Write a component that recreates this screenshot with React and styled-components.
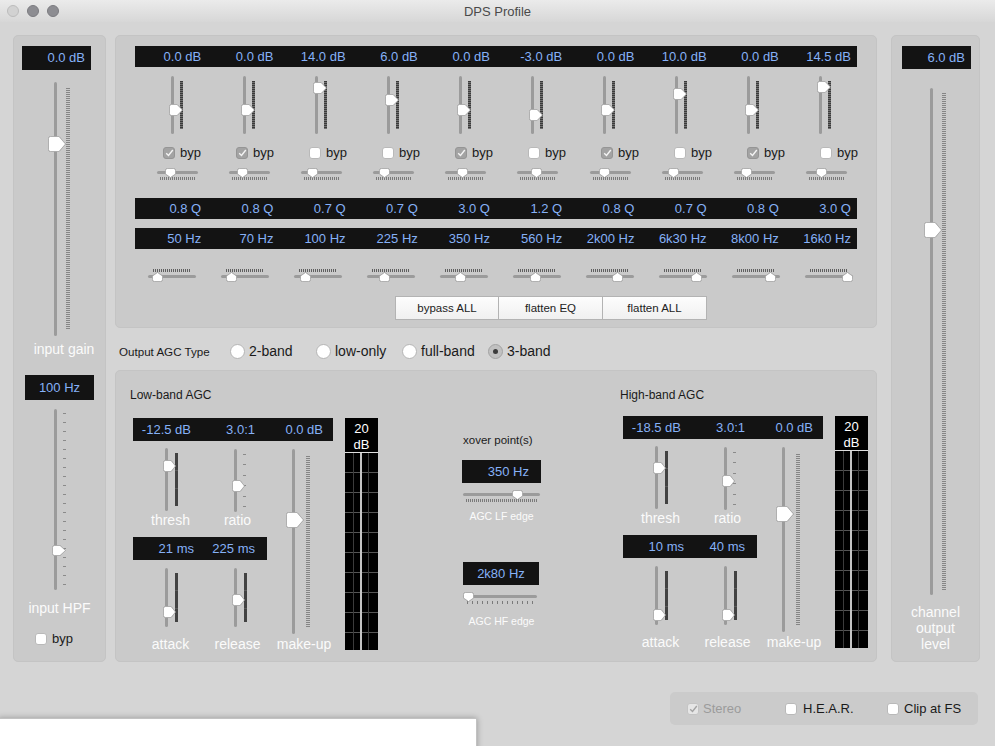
import React from 'react';
import styled, { createGlobalStyle } from 'styled-components';

const GlobalStyle = createGlobalStyle`
  html, body { margin: 0; padding: 0; }
  body {
    width: 995px; height: 746px; overflow: hidden;
    background: #d5d5d5;
    font-family: "Liberation Sans", Arial, Helvetica, sans-serif;
  }
  * { box-sizing: border-box; }
`;

/* ---------- window chrome ---------- */
const Window = styled.div`
  position: relative;
  width: 995px;
  height: 746px;
  background: #d5d5d5;
  overflow: hidden;
`;
const TitleBar = styled.div`
  height: 22px;
  display: grid;
  grid-template-columns: 1fr auto 1fr;
  align-items: center;
  padding: 0 7px;
  background: linear-gradient(#ebebeb, #d7d7d7);
`;
const Lights = styled.div`
  display: flex;
  gap: 8px;
`;
const Light = styled.span`
  width: 12px;
  height: 12px;
  border-radius: 50%;
  background: ${p => (p.$dim ? '#d2d2d2' : '#8d8d92')};
  border: 1px solid ${p => (p.$dim ? '#bcbcbc' : '#7b7b80')};
`;
const Title = styled.div`
  font-size: 13px;
  color: #4a4a4a;
`;

/* ---------- layout ---------- */
const Body = styled.div`
  display: flex;
  align-items: flex-start;
  padding: 13px 0 0 13px;
`;
const SidePanel = styled.div`
  width: ${p => p.$w}px;
  height: 627px;
  margin-left: ${p => p.$ml || 0}px;
  background: #cacaca;
  border: 1px solid #c4c4c4;
  border-radius: 5px;
  display: flex;
  flex-direction: column;
  align-items: flex-start;
`;
const CenterCol = styled.div`
  width: 762px;
  margin-left: 9px;
  display: flex;
  flex-direction: column;
`;
const EqPanel = styled.div`
  height: 293px;
  background: #cacaca;
  border: 1px solid #c4c4c4;
  border-radius: 5px;
  padding: 10px 19px 0 19px;
  display: flex;
  flex-direction: column;
`;
const AgcPanel = styled.div`
  height: 292px;
  background: #cacaca;
  border: 1px solid #c4c4c4;
  border-radius: 5px;
  padding: 17px 0 0 14px;
  display: flex;
  align-items: flex-start;
`;

/* ---------- readouts ---------- */
const Readout = styled.div`
  width: ${p => p.$w}px;
  height: ${p => p.$h}px;
  line-height: ${p => p.$h}px;
  margin: ${p => p.$mt || 0}px 0 0 ${p => p.$ml || 0}px;
  padding: 0 ${p => p.$pr ?? 6}px 0 6px;
  background: #131313;
  color: #86b1f7;
  font-size: 13px;
  text-align: ${p => p.$align || 'right'};
  white-space: nowrap;
`;
const ValueBar = styled.div`
  display: grid;
  grid-template-columns: repeat(10, 1fr);
  height: 21px;
  margin-top: ${p => p.$mt || 0}px;
  background: #131313;
`;
const ValueCell = styled.div`
  color: #86b1f7;
  font-size: 13px;
  line-height: 21px;
  text-align: right;
  padding-right: 6px;
  white-space: nowrap;
`;
const MultiReadout = styled.div`
  grid-column: ${p => p.$cols};
  grid-row: ${p => p.$row};
  display: grid;
  grid-template-columns: ${p => p.$tpl};
  background: #131313;
`;
const MultiCell = styled.div`
  color: #86b1f7;
  font-size: 13px;
  line-height: 23px;
  text-align: right;
  padding-right: ${p => p.$pr}px;
  white-space: nowrap;
`;

/* ---------- thumbs ---------- */
const ThumbSpot = styled.span`
  position: absolute;
  display: block;
  line-height: 0;
  filter: drop-shadow(0 0.5px 0.5px rgba(0, 0, 0, 0.25));
`;
function Thumb({ dir, w, h }) {
  let d;
  if (dir === 'right') {
    const b = Math.round(w * 0.6);
    d = `M2.5 .5H${b}L${w - 0.5} ${h / 2}L${b} ${h - 0.5}H2.5A2 2 0 0 1 .5 ${h - 2.5}V2.5A2 2 0 0 1 2.5 .5Z`;
  } else if (dir === 'down') {
    const b = Math.round(h * 0.55);
    d = `M.5 2.5A2 2 0 0 1 2.5 .5H${w - 2.5}A2 2 0 0 1 ${w - 0.5} 2.5V${b}L${w / 2} ${h - 0.5}L.5 ${b}Z`;
  } else {
    const b = h - Math.round(h * 0.55);
    d = `M${w / 2} .5L${w - 0.5} ${b}V${h - 2.5}A2 2 0 0 1 ${w - 2.5} ${h - 0.5}H2.5A2 2 0 0 1 .5 ${h - 2.5}V${b}Z`;
  }
  return (
    <svg width={w} height={h} viewBox={`0 0 ${w} ${h}`}>
      <path d={d} fill="#fff" stroke="#a8a8a8" strokeWidth="0.8" />
    </svg>
  );
}

/* ---------- vertical slider ---------- */
const scaleBg = (kind, step) => {
  switch (kind) {
    case 'dense':
      return 'repeating-linear-gradient(to bottom, #858585 0 1px, transparent 1px 2px)';
    case 'hatch':
      return 'repeating-linear-gradient(to bottom, #3a3a3a 0 1px, #707070 1px 2px)';
    case 'sparse':
      return `repeating-linear-gradient(to bottom, #8a8a8a 0 1px, transparent 1px ${step}px)`;
    case 'dark':
    default:
      return 'repeating-linear-gradient(to bottom, #424242 0 17px, #5a5a5a 17px 18px)';
  }
};
const VBox = styled.div`
  position: relative;
  display: flex;
  height: ${p => p.$h}px;
  margin: ${p => p.$mt || 0}px 0 0 ${p => p.$ml || 0}px;
`;
const VTrack = styled.div`
  width: 3px;
  background: #9b9b9b;
  border-radius: 1.5px;
`;
const VScale = styled.div`
  width: ${p => p.$w}px;
  margin: ${p => p.$inset}px 0 ${p => p.$inset}px ${p => p.$gap}px;
  background: ${p => scaleBg(p.$kind, p.$step)};
`;
function VSlider({ h, pos, ml, mt, big, tw, th, scale }) {
  const w = tw || (big ? 18 : 13);
  const hh = th || (big ? 16 : 12);
  const off = big ? -6 : -2;
  return (
    <VBox $h={h} $ml={ml} $mt={mt}>
      <VTrack />
      {scale && (
        <VScale $kind={scale.kind} $w={scale.w} $gap={scale.gap} $inset={scale.inset} $step={scale.step} />
      )}
      <ThumbSpot style={{ left: off, top: pos - hh / 2 }}>
        <Thumb dir="right" w={w} h={hh} />
      </ThumbSpot>
    </VBox>
  );
}

/* ---------- horizontal slider ---------- */
const HBox = styled.div`
  position: relative;
  width: ${p => p.$w}px;
  height: 13px;
  margin: ${p => p.$mt || 0}px 0 0 ${p => p.$ml || 0}px;
  padding-top: ${p => (p.$dir === 'down' ? 3 : 0)}px;
  display: flex;
  flex-direction: ${p => (p.$dir === 'down' ? 'column' : 'column-reverse')};
  justify-content: flex-end;
  gap: 3px;
  ${p => (p.$dir === 'down' ? 'justify-content: flex-start;' : '')}
`;
const HTrack = styled.div`
  height: 3px;
  flex: none;
  background: #9b9b9b;
  border-radius: 1.5px;
`;
const HTicks = styled.div`
  height: 3px;
  flex: none;
  margin: 0 ${p => p.$inset}px;
  background: repeating-linear-gradient(to right, ${p => p.$c} 0 1px, transparent 1px ${p => p.$step}px);
`;
function HSlider({ w, pos, dir, ml, mt, tick }) {
  return (
    <HBox $w={w} $ml={ml} $mt={mt} $dir={dir}>
      <HTrack />
      <HTicks $inset={tick.inset} $step={tick.step} $c={tick.c || '#6f6f6f'} />
      <ThumbSpot style={{ left: pos - 5.5, top: dir === 'down' ? 0 : 3 }}>
        <Thumb dir={dir} w={11} h={10} />
      </ThumbSpot>
    </HBox>
  );
}

/* ---------- checkboxes / radios / buttons ---------- */
const CheckBox = styled.span`
  width: 12px;
  height: 12px;
  flex: none;
  border-radius: 3px;
  display: inline-flex;
  align-items: center;
  justify-content: center;
  background: ${p => (p.$state === 'on' ? '#a3a3a3' : p.$state === 'disabled' ? '#e6e6e6' : '#fff')};
  border: 1px solid ${p => (p.$state === 'on' ? '#959595' : p.$state === 'disabled' ? '#c4c4c4' : '#b9b9b9')};
`;
function Check({ state }) {
  return (
    <CheckBox $state={state}>
      {state !== 'off' && (
        <svg width="9" height="8" viewBox="0 0 9 8">
          <path d="M1.2 4.2 L3.5 6.4 L7.8 1" fill="none" stroke={state === 'on' ? '#f4f4f4' : '#a3a3a3'} strokeWidth="1.4" />
        </svg>
      )}
    </CheckBox>
  );
}
const CheckItem = styled.label`
  display: flex;
  align-items: center;
  gap: ${p => p.$gap ?? 5}px;
  margin-left: ${p => p.$ml || 0}px;
  margin-top: ${p => p.$mt || 0}px;
  font-size: 13px;
  line-height: 14px;
  color: ${p => (p.$muted ? '#9b9b9b' : '#1a1a1a')};
`;
const EqCheckRow = styled.div`
  display: grid;
  grid-template-columns: repeat(10, 73px);
  margin-top: 12px;
`;
const AgcTypeRow = styled.div`
  height: 42px;
  display: grid;
  grid-template-columns: 111px repeat(4, 86px);
  align-items: center;
  padding: 4px 0 0 4px;
`;
const TypeLabel = styled.span`
  font-size: 11.6px;
  color: #1a1a1a;
`;
const RadioItem = styled.label`
  display: flex;
  align-items: center;
  gap: 4px;
  font-size: 14px;
  color: #1a1a1a;
`;
const RadioDot = styled.span`
  width: 15px;
  height: 15px;
  border-radius: 50%;
  display: inline-flex;
  align-items: center;
  justify-content: center;
  background: ${p => (p.$on ? '#c1c1c1' : '#fff')};
  border: 1px solid ${p => (p.$on ? '#a3a3a3' : '#b5b5b5')};
  &::after {
    content: '';
    display: ${p => (p.$on ? 'block' : 'none')};
    width: 5px;
    height: 5px;
    border-radius: 50%;
    background: #3c3c3c;
  }
`;
const ButtonRow = styled.div`
  display: flex;
  margin: 14px 0 0 260px;
`;
const PushButton = styled.button`
  width: 104px;
  height: 24px;
  padding: 0;
  font: 11.5px "Liberation Sans", Arial, sans-serif;
  color: #222;
  background: linear-gradient(#fdfdfd, #f0f0f0);
  border: 1px solid #b3b3b3;
  & + & {
    border-left: none;
  }
`;

/* ---------- EQ grids ---------- */
const ColGrid = styled.div`
  display: grid;
  grid-template-columns: repeat(10, ${p => p.$col}px);
  margin-top: ${p => p.$mt || 0}px;
  padding-left: ${p => p.$pl || 0}px;
`;

/* ---------- labels ---------- */
const SliderLabel = styled.div`
  align-self: stretch;
  text-align: center;
  color: #fbfbfb;
  font-size: 14px;
  line-height: 16px;
  margin-top: ${p => p.$mt || 0}px;
  padding-left: ${p => p.$shift || 0}px;
`;
const SmallLabel = styled.div`
  color: #fbfbfb;
  font-size: 10.5px;
  line-height: 14px;
  text-align: center;
  margin-top: ${p => p.$mt || 0}px;
`;

/* ---------- AGC band ---------- */
const BandBlock = styled.div`
  width: 248px;
  margin-left: ${p => p.$ml || 0}px;
  display: flex;
  flex-direction: column;
`;
const BandTitle = styled.div`
  font-size: 12px;
  line-height: 14px;
  color: #1a1a1a;
`;
const BandGrid = styled.div`
  margin: ${p => 16 + (p.$shift || 0)}px 0 0 3px;
  display: grid;
  grid-template-columns: 67px 67px 66px 45px;
  grid-template-rows: 23px 71px 25px 23px 74px 18px;
`;
const Cell = styled.div`
  grid-column: ${p => p.$col};
  grid-row: ${p => p.$row};
  display: flex;
  flex-direction: column;
`;
const CellLabel = styled.div`
  grid-column: ${p => p.$col};
  grid-row: ${p => p.$row};
  padding: ${p => p.$mt || 0}px 0 0 8px;
  text-align: center;
  color: #fbfbfb;
  font-size: 14px;
  line-height: 16px;
`;
const Meter = styled.div`
  grid-column: 4;
  grid-row: 1 / 7;
  justify-self: end;
  width: 33px;
  height: 232px;
  background: #000;
  display: flex;
  flex-direction: column;
`;
const MeterHead = styled.div`
  height: 35px;
  padding-top: 3px;
  border-bottom: 1px solid #dedede;
  color: #fff;
  font-size: 13px;
  line-height: 16px;
  text-align: center;
`;
const MeterGrid = styled.div`
  flex: 1;
  background:
    linear-gradient(to right, transparent 8px, #3c3c3c 8px 9px, transparent 9px 15px, #c4c4c4 15px 17px, transparent 17px 23px, #3c3c3c 23px 24px, transparent 24px),
    repeating-linear-gradient(to bottom, transparent 0 19px, #555 19px 20px);
`;

const Xover = styled.div`
  width: 79px;
  margin-left: 84px;
  display: flex;
  flex-direction: column;
`;
const XoverTitle = styled.div`
  margin: 45px 0 0 1px;
  font-size: 11.5px;
  line-height: 14px;
  color: #1a1a1a;
`;

/* ---------- footer ---------- */
const Footer = styled.div`
  display: flex;
  justify-content: flex-end;
  margin-top: 30px;
  padding-right: 17px;
`;
const OptionsPanel = styled.div`
  width: 308px;
  height: 33px;
  border-radius: 5px;
  background: #cbcbcb;
  display: grid;
  grid-template-columns: 98px 102px auto;
  align-items: center;
  padding-left: 17px;
`;
const OtherWindow = styled.div`
  position: absolute;
  left: -2px;
  top: 718px;
  width: 479px;
  height: 40px;
  background: #fff;
  border: 1px solid #c2c2c2;
  box-shadow: 0 0 6px rgba(0, 0, 0, 0.3);
`;

/* ---------- data ---------- */
const dbVals = ['0.0 dB', '0.0 dB', '14.0 dB', '6.0 dB', '0.0 dB', '-3.0 dB', '0.0 dB', '10.0 dB', '0.0 dB', '14.5 dB'];
const gains = [0, 0, 14, 6, 0, -3, 0, 10, 0, 14.5];
const byp = [true, true, false, false, true, false, true, false, true, false];
const qVals = ['0.8 Q', '0.8 Q', '0.7 Q', '0.7 Q', '3.0 Q', '1.2 Q', '0.8 Q', '0.7 Q', '0.8 Q', '3.0 Q'];
const qThumb = [13.5, 13.5, 11, 11, 17, 19, 15, 12, 13, 16];
const hzVals = ['50 Hz', '70 Hz', '100 Hz', '225 Hz', '350 Hz', '560 Hz', '2k00 Hz', '6k30 Hz', '8k00 Hz', '16k0 Hz'];
const fThumb = [9.5, 10, 11, 17.3, 20.3, 22.3, 31, 37, 38, 42.5];

const scales = {
  eq: { kind: 'hatch', w: 3, gap: 6, inset: 5 },
  dark: { kind: 'dark', w: 3, gap: 7, inset: 5 },
  ratio: { kind: 'sparse', w: 3, gap: 6, inset: 5, step: 10.4 },
  makeup: { kind: 'dense', w: 4, gap: 11, inset: 7 },
};

function Band({ title, ml, shift, d1, d2, th }) {
  return (
    <BandBlock $ml={ml}>
      <BandTitle>{title}</BandTitle>
      <BandGrid $shift={shift}>
        <MultiReadout $cols="1 / 4" $row="1" $tpl="67px 67px 66px">
          <MultiCell $pr={9}>{d1[0]}</MultiCell>
          <MultiCell $pr={12}>{d1[1]}</MultiCell>
          <MultiCell $pr={10}>{d1[2]}</MultiCell>
        </MultiReadout>
        <Cell $col="1" $row="2">
          <VSlider h={63} mt={7} ml={32} pos={th.thresh} scale={scales.dark} />
        </Cell>
        <Cell $col="2" $row="2">
          <VSlider h={63} mt={8} ml={34} pos={th.ratio} scale={scales.ratio} />
        </Cell>
        <CellLabel $col="1" $row="3">thresh</CellLabel>
        <CellLabel $col="2" $row="3">ratio</CellLabel>
        <MultiReadout $cols="1 / 3" $row="4" $tpl="67px 67px">
          <MultiCell $pr={6}>{d2[0]}</MultiCell>
          <MultiCell $pr={12}>{d2[1]}</MultiCell>
        </MultiReadout>
        <Cell $col="1" $row="5">
          <VSlider h={59} mt={8} ml={32} pos={th.attack} scale={scales.dark} />
        </Cell>
        <Cell $col="2" $row="5">
          <VSlider h={59} mt={8} ml={34} pos={th.release} scale={scales.dark} />
        </Cell>
        <Cell $col="3" $row="2 / 6">
          <VSlider h={185} mt={8} ml={25} pos={th.makeup} big scale={scales.makeup} />
        </Cell>
        <CellLabel $col="1" $row="6" $mt={2}>attack</CellLabel>
        <CellLabel $col="2" $row="6" $mt={2}>release</CellLabel>
        <CellLabel $col="3" $row="6" $mt={2}>make-up</CellLabel>
        <Meter>
          <MeterHead>20<br />dB</MeterHead>
          <MeterGrid />
        </Meter>
      </BandGrid>
    </BandBlock>
  );
}

export default function App() {
  return (
    <Window>
      <GlobalStyle />
      <TitleBar>
        <Lights>
          <Light $dim />
          <Light />
          <Light />
        </Lights>
        <Title>DPS Profile</Title>
        <span />
      </TitleBar>

      <Body>
        {/* input column */}
        <SidePanel $w={93}>
          <Readout $w={69} $h={24} $mt={10} $ml={8}>0.0 dB</Readout>
          <VSlider h={254} mt={12} ml={40} pos={62} big scale={{ kind: 'dense', w: 4, gap: 9, inset: 6 }} />
          <SliderLabel $mt={5} $shift={9}>input gain</SliderLabel>
          <Readout $w={69} $h={25} $mt={18} $ml={11} $align="center">100 Hz</Readout>
          <VSlider h={181} mt={9} ml={40} pos={141} tw={14} th={11} scale={{ kind: 'sparse', w: 3, gap: 6, inset: 4, step: 9 }} />
          <SliderLabel $mt={10}>input HPF</SliderLabel>
          <CheckItem $ml={21} $mt={16}>
            <Check state="off" />
            byp
          </CheckItem>
        </SidePanel>

        <CenterCol>
          <EqPanel>
            <ValueBar>
              {dbVals.map((v, i) => <ValueCell key={i}>{v}</ValueCell>)}
            </ValueBar>
            <ColGrid $col={72} $mt={9}>
              {gains.map((g, i) => (
                <VSlider key={i} h={58} ml={36} pos={34 - 1.6 * g} tw={14} scale={scales.eq} />
              ))}
            </ColGrid>
            <EqCheckRow>
              {byp.map((b, i) => (
                <CheckItem key={i} $ml={28}>
                  <Check state={b ? 'on' : 'off'} />
                  byp
                </CheckItem>
              ))}
            </EqCheckRow>
            <ColGrid $col={72.1} $mt={8}>
              {qThumb.map((p, i) => (
                <HSlider key={i} w={41} ml={22} pos={p} dir="down" tick={{ inset: 3, step: 2, c: '#7a7a7a' }} />
              ))}
            </ColGrid>
            <ValueBar $mt={17}>
              {qVals.map((v, i) => <ValueCell key={i}>{v}</ValueCell>)}
            </ValueBar>
            <ValueBar $mt={9}>
              {hzVals.map((v, i) => <ValueCell key={i}>{v}</ValueCell>)}
            </ValueBar>
            <ColGrid $col={73} $mt={20} $pl={13}>
              {fThumb.map((p, i) => (
                <HSlider key={i} w={48} pos={p} dir="up" tick={{ inset: 5, step: 2, c: '#5f5f5f' }} />
              ))}
            </ColGrid>
            <ButtonRow>
              <PushButton>bypass ALL</PushButton>
              <PushButton>flatten EQ</PushButton>
              <PushButton>flatten ALL</PushButton>
            </ButtonRow>
          </EqPanel>

          <AgcTypeRow>
            <TypeLabel>Output AGC Type</TypeLabel>
            <RadioItem><RadioDot />2-band</RadioItem>
            <RadioItem><RadioDot />low-only</RadioItem>
            <RadioItem><RadioDot />full-band</RadioItem>
            <RadioItem><RadioDot $on />3-band</RadioItem>
          </AgcTypeRow>

          <AgcPanel>
            <Band
              title="Low-band AGC"
              d1={['-12.5 dB', '3.0:1', '0.0 dB']}
              d2={['21 ms', '225 ms']}
              th={{ thresh: 18, ratio: 37, attack: 44, release: 32, makeup: 71 }}
            />
            <Xover>
              <XoverTitle>xover point(s)</XoverTitle>
              <Readout $w={79} $h={23} $mt={13} $pr={12}>350 Hz</Readout>
              <HSlider w={77} ml={1} mt={7} pos={54} dir="down" tick={{ inset: 3, step: 2, c: '#7a7a7a' }} />
              <SmallLabel $mt={6}>AGC LF edge</SmallLabel>
              <Readout $w={76} $h={23} $mt={39} $ml={1} $align="center">2k80 Hz</Readout>
              <HSlider w={74} ml={1} mt={7} pos={5.5} dir="down" tick={{ inset: 4, step: 5, c: '#7a7a7a' }} />
              <SmallLabel $mt={9}>AGC HF edge</SmallLabel>
            </Xover>
            <Band
              title="High-band AGC"
              ml={79}
              shift={-2}
              d1={['-18.5 dB', '3.0:1', '0.0 dB']}
              d2={['10 ms', '40 ms']}
              th={{ thresh: 22, ratio: 34, attack: 49, release: 49, makeup: 67 }}
            />
          </AgcPanel>
        </CenterCol>

        {/* output column */}
        <SidePanel $w={89} $ml={14}>
          <Readout $w={69} $h={23} $mt={10} $ml={10}>6.0 dB</Readout>
          <VSlider h={507} mt={19} ml={38} pos={142} big scale={{ kind: 'dense', w: 4, gap: 9, inset: 5 }} />
          <SliderLabel $mt={9}>channel<br />output<br />level</SliderLabel>
        </SidePanel>
      </Body>

      <Footer>
        <OptionsPanel>
          <CheckItem $gap={4} $muted>
            <Check state="disabled" />
            Stereo
          </CheckItem>
          <CheckItem $gap={6}>
            <Check state="off" />
            H.E.A.R.
          </CheckItem>
          <CheckItem $gap={5}>
            <Check state="off" />
            Clip at FS
          </CheckItem>
        </OptionsPanel>
      </Footer>

      <OtherWindow />
    </Window>
  );
}
